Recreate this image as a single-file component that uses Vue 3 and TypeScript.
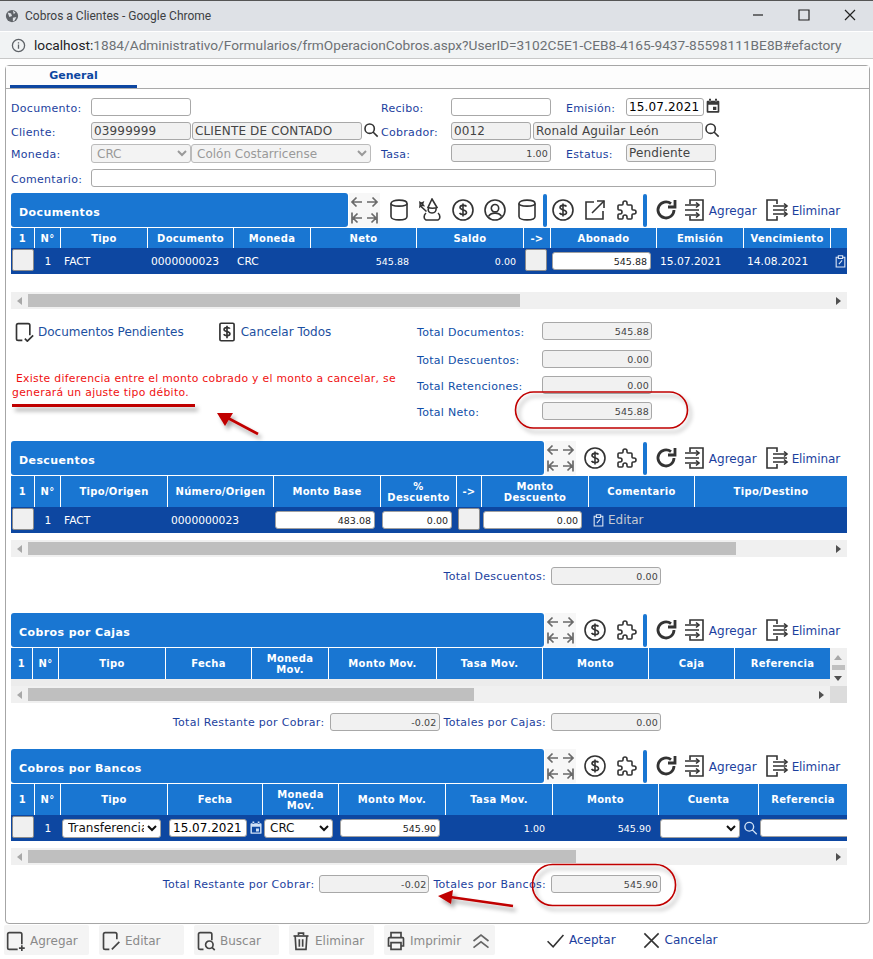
<template>
  <div class="page">
    <header class="titlebar">
      <svg class="globe" viewBox="0 0 16 16"><circle cx="8" cy="8" r="7" fill="#5f6368" /><path d="M3 4l4 1 1 3-3 1zM9 2l3 2-2 2zM9 10l4-1-2 4-2 1z" fill="#dee1e6" /></svg>
      <span class="titlebar-text">Cobros a Clientes - Google Chrome</span>
      <div class="win-controls">
        <svg viewBox="0 0 16 16"><path d="M3 8h10" /></svg>
        <svg viewBox="0 0 16 16"><path d="M3 3h10v10H3z" /></svg>
        <svg viewBox="0 0 16 16"><path d="M3 3l10 10M13 3L3 13" /></svg>
      </div>
    </header>
    <div class="urlbar">
      <svg class="info" viewBox="0 0 16 16"><circle cx="8" cy="8" r="6.5" /><path d="M8 7v4.500M8 4.500v1.300" /></svg>
      <span class="url"><b>localhost:</b>1884/Administrativo/Formularios/frmOperacionCobros.aspx?UserID=3102C5E1-CEB8-4165-9437-85598111BE8B#efactory</span>
    </div>

    <main class="panel">
      <div class="tabs"><div class="tab">General</div></div>

      <form class="form" @submit.prevent>
        <label class="lbl">Documento:</label>
        <input class="fld" />
        <span></span>
        <label class="lbl">Recibo:</label>
        <input class="fld" />
        <span></span>
        <label class="lbl">Emisión:</label>
        <div class="fld-group">
          <input class="fld fld--date" value="15.07.2021" />
          <svg class="ico-sm" viewBox="0 0 24 24"><use href="#cal" /></svg>
        </div>

        <label class="lbl">Cliente:</label>
        <input class="fld fld--ro" value="03999999" readonly />
        <div class="fld-group">
          <input class="fld fld--ro fld--name" value="CLIENTE DE CONTADO" readonly />
          <svg class="ico-sm ico-search" viewBox="0 0 24 24"><path d="M10 3a7 7 0 1 0 0 14a7 7 0 0 0 0-14zM15 15l7 7" /></svg>
        </div>
        <label class="lbl">Cobrador:</label>
        <div class="fld-group fld-group--wide">
          <input class="fld fld--ro fld--code" value="0012" readonly />
          <input class="fld fld--ro fld--name2" value="Ronald Aguilar León" readonly />
          <svg class="ico-sm ico-search" viewBox="0 0 24 24"><path d="M10 3a7 7 0 1 0 0 14a7 7 0 0 0 0-14zM15 15l7 7" /></svg>
        </div>

        <label class="lbl">Moneda:</label>
        <select class="sel" disabled><option>CRC</option></select>
        <div class="fld-group"><select class="sel sel--long" disabled><option>Colón Costarricense</option></select></div>
        <label class="lbl">Tasa:</label>
        <input class="fld fld--ro fld--num" value="1.00" readonly />
        <span></span>
        <label class="lbl">Estatus:</label>
        <input class="fld fld--ro fld--status" value="Pendiente" readonly />

        <label class="lbl">Comentario:</label>
        <input class="fld fld--comment" />
      </form>

      <svg class="defs" width="0" height="0">
        <symbol id="cal" viewBox="0 0 24 24">
          <path d="M4 4h16a1.500 1.500 0 0 1 1.500 1.500v15a1.500 1.500 0 0 1-1.500 1.500H4a1.500 1.500 0 0 1-1.500-1.500v-15A1.500 1.500 0 0 1 4 4zM5 10v9.500h14V10zM6 1h3v4H6zM15 1h3v4h-3zM12 13h5v5h-5z" fill="currentColor" fill-rule="evenodd" stroke="none" />
        </symbol>
      </svg>

      <section v-for="s in sections" :key="s.id" class="section" :class="'section--' + s.id">
        <div class="sec-head">
          <div class="sec-title">{{ s.title }}</div>
          <div class="tools">
            <svg class="arrows" viewBox="0 0 31 34">
              <path d="M13 9H3M7.500 4.500L3 9l4.500 4.500M18 9h10M23.500 4.500L28 9l-4.500 4.500M13 25H4M8.500 20.500L4 25l4.500 4.500M3 19.500v11M18 25h9M22.500 20.500L27 25l-4.500 4.500M28 19.500v11" />
            </svg>
            <template v-for="(t, i) in s.tools" :key="i">
              <span v-if="t === '|'" class="divider"></span>
              <svg v-else class="tool" viewBox="0 0 24 24"><path v-for="d in icons[t]" :key="d" :d="d" /></svg>
            </template>
            <svg class="tool tool--refresh" viewBox="0 0 24 24"><path v-for="d in icons.refresh" :key="d" :d="d" /></svg>
            <svg class="tool tool--add" viewBox="0 0 24 24"><path v-for="d in icons.enter" :key="d" :d="d" /></svg>
            <a class="tool-link">Agregar</a>
            <svg class="tool tool--del" viewBox="0 0 24 24"><path v-for="d in icons.leave" :key="d" :d="d" /></svg>
            <a class="tool-link tool-link--del">Eliminar</a>
          </div>
        </div>

        <div class="table-wrap">
          <div class="table">
            <div class="grid-head" :style="{ gridTemplateColumns: s.columns.map((c) => c.w + 'px').join(' ') }">
              <div v-for="c in s.columns" :key="c.label" class="th">{{ c.label }}</div>
            </div>
            <div v-if="s.cells.length" class="grid-row" :style="{ gridTemplateColumns: s.columns.map((c) => c.w + 'px').join(' ') }">
              <div v-for="(c, i) in s.cells" :key="i" class="td" :class="{ 'td--r': c.k === 'num', 'td--c': c.k === 'n' }">
                <button v-if="c.k === 'check'" class="chk" type="button"></button>
                <template v-else-if="c.k === 'input'">
                  <input class="cell-input" :class="{ 'cell-input--date': c.date }" :value="c.v" :style="{ width: c.w + 'px' }" />
                  <svg v-if="c.date" class="ico-white" viewBox="0 0 24 24"><use href="#cal" /></svg>
                </template>
                <template v-else-if="c.k === 'select'">
                  <select class="cell-select" :style="{ width: c.w + 'px' }"><option>{{ c.v }}</option></select>
                  <svg v-if="c.search" class="ico-white ico-white--search" viewBox="0 0 24 24"><path d="M10 3a7 7 0 1 0 0 14a7 7 0 0 0 0-14zM15 15l7 7" /></svg>
                </template>
                <template v-else-if="c.k === 'edit'">
                  <svg class="ico-clip" viewBox="0 0 24 24"><path v-for="d in icons.clip" :key="d" :d="d" /></svg>
                  <span v-if="c.v" class="edit-text">{{ c.v }}</span>
                </template>
                <span v-else :class="{ 'td-num': c.k === 'num' }">{{ c.v }}</span>
              </div>
            </div>
            <div v-else class="empty-strip"></div>
          </div>
          <div v-if="s.id === 'cajas'" class="vscroll">
            <i class="vs-up"></i><i class="vs-thumb"></i><i class="vs-down"></i>
          </div>
        </div>

        <div class="hscroll">
          <i class="hs-left"></i>
          <div class="hs-track"><div class="hs-thumb" :style="{ width: s.thumb + 'px' }"></div></div>
          <i class="hs-right"></i>
          <div v-if="s.id === 'cajas'" class="hs-corner"></div>
        </div>

        <div v-if="s.id === 'documentos'" class="doc-foot">
          <div class="doc-left">
            <div class="links">
              <a class="link link--first"><svg viewBox="0 0 24 24"><path v-for="d in icons.docCheck" :key="d" :d="d" /></svg>Documentos Pendientes</a>
              <a class="link"><svg viewBox="0 0 24 24"><path v-for="d in icons.docDollar" :key="d" :d="d" /></svg>Cancelar Todos</a>
            </div>
            <p class="warn">Existe diferencia entre el monto cobrado y el monto a cancelar, se generará un ajuste tipo débito.</p>
          </div>
          <div class="doc-totals">
            <template v-for="t in docTotals" :key="t.label">
              <label class="lbl lbl--total">{{ t.label }}</label>
              <input class="fld fld--ro fld--num fld--total" :value="t.v" readonly />
            </template>
          </div>
        </div>
        <div v-else class="sum-row">
          <template v-for="t in s.totals" :key="t.label">
            <label class="lbl lbl--sum">{{ t.label }}</label>
            <input class="fld fld--ro fld--num fld--total" :value="t.v" readonly />
          </template>
        </div>
      </section>
    </main>

    <footer class="actions">
      <button v-for="b in actions" :key="b.label" class="act" type="button">
        <svg viewBox="0 0 24 24"><path v-for="d in icons[b.icon]" :key="d" :d="d" /></svg>{{ b.label }}
      </button>
      <button class="act act--print" type="button">
        <svg viewBox="0 0 24 24"><path v-for="d in icons.print" :key="d" :d="d" /></svg>Imprimir
        <svg class="chev" viewBox="0 0 24 24"><path v-for="d in icons.chev" :key="d" :d="d" /></svg>
      </button>
      <a class="confirm confirm--ok"><svg viewBox="0 0 24 24"><path d="M2 13l7 7L22 5" /></svg>Aceptar</a>
      <a class="confirm"><svg viewBox="0 0 24 24"><path d="M3 3l18 18M21 3L3 21" /></svg>Cancelar</a>
    </footer>

    <!-- hand drawn marks on top of the capture -->
    <svg class="marks" width="873" height="959" viewBox="0 0 873 959">
      <defs>
        <filter id="sh" x="-20%" y="-60%" width="140%" height="240%">
          <feDropShadow dx="3" dy="4" stdDeviation="2" flood-color="#000" flood-opacity="0.35" />
        </filter>
      </defs>
      <g filter="url(#sh)" fill="none" stroke="#c00000">
        <path d="M12 405.500H195" stroke-width="3" />
        <rect x="515.500" y="392" width="172" height="36" rx="18" stroke-width="1.600" />
        <rect x="532.500" y="864.500" width="143" height="41" rx="20" stroke-width="1.600" />
        <path d="M258 434L226 417" stroke-width="2.600" />
        <path d="M217 413L233 413L225 426Z" fill="#c00000" stroke="none" />
        <path d="M513 906L450 897" stroke-width="2.600" />
        <path d="M438 896L453 890L451 904Z" fill="#c00000" stroke="none" />
      </g>
    </svg>
  </div>
</template>

<script setup lang="ts">
interface Column {
  label: string
  w: number
}

interface Cell {
  k: 'check' | 'n' | 'text' | 'num' | 'input' | 'select' | 'edit' | 'blank'
  v?: string
  w?: number
  date?: boolean
  search?: boolean
}

interface Total {
  label: string
  v: string
}

interface Section {
  id: string
  title: string
  tools: string[]
  thumb: number
  columns: Column[]
  cells: Cell[]
  totals: Total[]
}

const icons: Record<string, string[]> = {
  db: ['M4 5.500c0-4.500 16-4.500 16 0v13c0 4.500-16 4.500-16 0z', 'M4 5.500c0 3.500 16 3.500 16 0'],
  wizard: [
    'M13 1l-4 8.500c2 1 7 1 9 0z',
    'M9.500 10c-1 3 .5 5 3.500 5s4.500-2 4-5',
    'M7 15c-2.500 2-2.500 6 0 7h12c2.500-1 2.500-5 0-7',
    'M1.500 8l6 5.500',
    'M1 4.500l1.500.8 1.500-.8-.5 1.600 1 1.400-2-.2-1.500 1.200.2-2z',
  ],
  dollar: [
    'M12 2a10 10 0 1 0 0 20a10 10 0 0 0 0-20z',
    'M15.500 8.500c-1-1.500-6.500-1.800-6.500 1.100 0 3.100 6.500 1.600 6.500 4.800 0 2.800-5.600 2.600-7 .6',
    'M12 5.500v13',
  ],
  user: [
    'M12 2a10 10 0 1 0 0 20a10 10 0 0 0 0-20z',
    'M12 6.500a3.700 3.700 0 1 0 0 7.400a3.700 3.700 0 0 0 0-7.400z',
    'M5.500 18.500c2-4.500 11-4.500 13 0',
  ],
  external: ['M11 4H3v17h17v-8', 'M9 15L21 3', 'M14 3h7v7'],
  puzzle: [
    'M4 7h3a1 1 0 0 0 1-1v-1a2 2 0 0 1 4 0v1a1 1 0 0 0 1 1h3a1 1 0 0 1 1 1v3a1 1 0 0 0 1 1h1a2 2 0 0 1 0 4h-1a1 1 0 0 0-1 1v3a1 1 0 0 1-1 1h-3a1 1 0 0 1-1-1v-1a2 2 0 0 0-4 0v1a1 1 0 0 1-1 1h-3a1 1 0 0 1-1-1v-3a1 1 0 0 1 1-1h1a2 2 0 0 0 0-4h-1a1 1 0 0 1-1-1v-3a1 1 0 0 1 1-1',
  ],
  refresh: ['M20 12a8 8 0 1 1-3-6.300', 'M21 2v7h-7'],
  enter: ['M8 6V2h13v20H8v-4', 'M3 7h14M3 12h14M3 17h14', 'M14 4.500l3 2.500-3 2.500M14 14.500l3 2.500-3 2.500'],
  leave: ['M12 6V2H2v20h10v-4', 'M8 8h14M8 12h14M8 16h14', 'M19 5.500L22 8l-3 2.500M19 13.500l3 2.500-3 2.500'],
  clip: ['M8 4H4v18h16V4h-4', 'M8 1.500h8v5H8z', 'M9 17l6-7'],
  docCheck: ['M10 22H5a2 2 0 0 1-2-2V4a2 2 0 0 1 2-2h12a2 2 0 0 1 2 2v12', 'M13 20l3 3 7-7'],
  docDollar: [
    'M5 1.500h14a1.500 1.500 0 0 1 1.500 1.500v18a1.500 1.500 0 0 1-1.500 1.500H5A1.500 1.500 0 0 1 3.500 21V3A1.500 1.500 0 0 1 5 1.500z',
    'M15.500 8c-1-1.800-7-2-7 1 0 3.200 7 1.800 7 5 0 3-6 2.800-7.500.7',
    'M12 4.500v15',
  ],
  addDoc: ['M14 22H4a2 2 0 0 1-2-2V4a2 2 0 0 1 2-2h13a2 2 0 0 1 2 2v12', 'M19 17v7M15.500 20.500h7'],
  editDoc: ['M10 22H5a2 2 0 0 1-2-2V4a2 2 0 0 1 2-2h12a2 2 0 0 1 2 2v6', 'M13 22l9-9'],
  findDoc: [
    'M9 22H5a2 2 0 0 1-2-2V4a2 2 0 0 1 2-2h12a2 2 0 0 1 2 2v7',
    'M16 12a4.500 4.500 0 1 0 0 9a4.500 4.500 0 0 0 0-9zM19.500 20l3 3',
  ],
  trash: ['M3 6h18', 'M9 5V2.500h6V5', 'M5 6l1 16h12l1-16', 'M10 10v9M14 10v9'],
  print: ['M6 8V2h12v6', 'M6 18H3V9a1 1 0 0 1 1-1h16a1 1 0 0 1 1 1v9h-3', 'M6 14h12v8H6z'],
  chev: ['M3 12l9-7 9 7', 'M3 20l9-7 9 7'],
}

const actions = [
  { label: 'Agregar', icon: 'addDoc' },
  { label: 'Editar', icon: 'editDoc' },
  { label: 'Buscar', icon: 'findDoc' },
  { label: 'Eliminar', icon: 'trash' },
]

const docTotals: Total[] = [
  { label: 'Total Documentos:', v: '545.88' },
  { label: 'Total Descuentos:', v: '0.00' },
  { label: 'Total Retenciones:', v: '0.00' },
  { label: 'Total Neto:', v: '545.88' },
]

const common = ['dollar', 'puzzle', '|']

const sections: Section[] = [
  {
    id: 'documentos',
    title: 'Documentos',
    tools: ['db', 'wizard', 'dollar', 'user', 'db', '|', 'dollar', 'external', 'puzzle', '|'],
    thumb: 492,
    columns: [
      { label: '1', w: 24 },
      { label: 'N°', w: 26 },
      { label: 'Tipo', w: 87 },
      { label: 'Documento', w: 86 },
      { label: 'Moneda', w: 77 },
      { label: 'Neto', w: 106 },
      { label: 'Saldo', w: 107 },
      { label: '->', w: 27 },
      { label: 'Abonado', w: 106 },
      { label: 'Emisión', w: 87 },
      { label: 'Vencimiento', w: 87 },
      { label: '', w: 16 },
    ],
    cells: [
      { k: 'check' },
      { k: 'n', v: '1' },
      { k: 'text', v: 'FACT' },
      { k: 'text', v: '0000000023' },
      { k: 'text', v: 'CRC' },
      { k: 'num', v: '545.88' },
      { k: 'num', v: '0.00' },
      { k: 'check' },
      { k: 'input', v: '545.88', w: 99 },
      { k: 'text', v: '15.07.2021' },
      { k: 'text', v: '14.08.2021' },
      { k: 'edit' },
    ],
    totals: [],
  },
  {
    id: 'descuentos',
    title: 'Descuentos',
    tools: common,
    thumb: 708,
    columns: [
      { label: '1', w: 24 },
      { label: 'N°', w: 26 },
      { label: 'Tipo/Origen', w: 107 },
      { label: 'Número/Origen', w: 106 },
      { label: 'Monto Base', w: 107 },
      { label: '%\nDescuento', w: 76 },
      { label: '->', w: 25 },
      { label: 'Monto\nDescuento', w: 107 },
      { label: 'Comentario', w: 106 },
      { label: 'Tipo/Destino', w: 152 },
    ],
    cells: [
      { k: 'check' },
      { k: 'n', v: '1' },
      { k: 'text', v: 'FACT' },
      { k: 'text', v: '0000000023' },
      { k: 'input', v: '483.08', w: 100 },
      { k: 'input', v: '0.00', w: 70 },
      { k: 'check' },
      { k: 'input', v: '0.00', w: 99 },
      { k: 'edit', v: 'Editar' },
      { k: 'blank' },
    ],
    totals: [{ label: 'Total Descuentos:', v: '0.00' }],
  },
  {
    id: 'cajas',
    title: 'Cobros por Cajas',
    tools: common,
    thumb: 446,
    columns: [
      { label: '1', w: 22 },
      { label: 'N°', w: 26 },
      { label: 'Tipo', w: 107 },
      { label: 'Fecha', w: 86 },
      { label: 'Moneda\nMov.', w: 77 },
      { label: 'Monto Mov.', w: 108 },
      { label: 'Tasa Mov.', w: 106 },
      { label: 'Monto', w: 106 },
      { label: 'Caja', w: 86 },
      { label: 'Referencia', w: 95 },
    ],
    cells: [],
    totals: [
      { label: 'Total Restante por Cobrar:', v: '-0.02' },
      { label: 'Totales por Cajas:', v: '0.00' },
    ],
  },
  {
    id: 'bancos',
    title: 'Cobros por Bancos',
    tools: common,
    thumb: 548,
    columns: [
      { label: '1', w: 24 },
      { label: 'N°', w: 26 },
      { label: 'Tipo', w: 107 },
      { label: 'Fecha', w: 95 },
      { label: 'Moneda\nMov.', w: 76 },
      { label: 'Monto Mov.', w: 107 },
      { label: 'Tasa Mov.', w: 107 },
      { label: 'Monto', w: 106 },
      { label: 'Cuenta', w: 100 },
      { label: 'Referencia', w: 88 },
    ],
    cells: [
      { k: 'check' },
      { k: 'n', v: '1' },
      { k: 'select', v: 'Transferencia', w: 99 },
      { k: 'input', v: '15.07.2021', w: 78, date: true },
      { k: 'select', v: 'CRC', w: 69 },
      { k: 'input', v: '545.90', w: 100 },
      { k: 'num', v: '1.00' },
      { k: 'num', v: '545.90' },
      { k: 'select', v: '', w: 80, search: true },
      { k: 'input', v: '', w: 100 },
    ],
    totals: [
      { label: 'Total Restante por Cobrar:', v: '-0.02' },
      { label: 'Totales por Bancos:', v: '545.90' },
    ],
  },
]
</script>

<style scoped>
.page {
  position: relative;
  width: 873px;
  height: 959px;
  overflow: hidden;
  background: #fff;
  font-family: "DejaVu Sans", Verdana, sans-serif;
  font-size: 11px;
  color: #1c3f9e;
}
.titlebar {
  display: flex;
  align-items: center;
  height: 31px;
  box-sizing: border-box;
  padding-left: 5px;
  background: #dee1e6;
  border-top: 1px solid #555;
}
.globe {
  width: 14px;
  height: 14px;
  margin-right: 6px;
}
.titlebar-text {
  font-family: Roboto, sans-serif;
  font-size: 12px;
  color: #3c4043;
}
.win-controls {
  display: flex;
  gap: 30px;
  margin: 0 0 2px auto;
  padding-right: 15px;
}
.win-controls svg {
  width: 16px;
  height: 16px;
  fill: none;
  stroke: #222;
  stroke-width: 1.2;
}
.urlbar {
  display: flex;
  align-items: center;
  height: 27px;
  margin-top: 1px;
  padding-left: 11px;
  background: #f1f3f4;
  border-bottom: 1px solid #c8c8c8;
  box-sizing: border-box;
}
.info {
  width: 15px;
  height: 15px;
  margin-right: 8px;
  fill: none;
  stroke: #5f6368;
  stroke-width: 1.4;
}
.url {
  font-family: Roboto, sans-serif;
  font-size: 13.700px;
  color: #6d7175;
  white-space: nowrap;
}
.url b {
  font-weight: 400;
  color: #202124;
}
.panel {
  box-sizing: border-box;
  width: 865px;
  height: 859px;
  margin: 6px 0 0 5px;
  padding: 0 5px;
  border: 1px solid #a6a6a6;
  border-radius: 4px;
}
.tabs {
  height: 23px;
  margin: 0 -5px;
  padding-left: 4px;
  background: #fdfdfd;
  border-bottom: 1px solid #aaa;
  box-sizing: border-box;
}
.tab {
  width: 127px;
  height: 22px;
  box-sizing: border-box;
  border-bottom: 3px solid #0d47a1;
  color: #0d47a1;
  font-weight: 700;
  text-align: center;
  line-height: 19px;
}
.form {
  display: grid;
  grid-template-columns: 80px 100px 190px 70px 100px 15px 60px 1fr;
  grid-template-rows: 24px 22px 25px 18px;
  margin-top: 9px;
}
.lbl {
  padding-top: 2px;
  line-height: 18px;
  letter-spacing: 0.3px;
  white-space: nowrap;
}
.fld {
  box-sizing: border-box;
  height: 18px;
  width: 100%;
  margin: 0;
  padding: 0 2px;
  border: 1px solid #a8a8a8;
  border-radius: 3px;
  background: #fff;
  color: #444;
  outline: none;
  letter-spacing: 0.15px;
  font: 12px "DejaVu Sans", Verdana, sans-serif;
}
.fld--ro {
  background: #f1f1f1;
}
.fld--num {
  text-align: right;
  font-size: 9.500px;
}
.fld--name {
  width: 170px;
  margin-left: 1px;
}
.fld--code {
  width: 80px;
  flex: none;
}
.fld--name2 {
  width: 170px;
  margin-left: 2px;
  flex: none;
}
.fld--date {
  width: 78px;
  flex: none;
  color: #000;
}
.fld--status {
  width: 90px;
}
.fld--comment {
  grid-column: 2 / 9;
  width: 625px;
}
.fld-group {
  display: flex;
  align-items: flex-start;
}
.fld-group--wide {
  grid-column: 5 / 9;
}
.ico-sm {
  flex: none;
  width: 16px;
  height: 16px;
  margin-left: 1px;
  color: #3a3a3a;
}
.ico-search {
  fill: none;
  stroke: #333;
  stroke-width: 2.400;
}
.sel {
  box-sizing: border-box;
  height: 19px;
  width: 100px;
  border: 1px solid #bbb;
  border-radius: 3px;
  background: #f3f3f3;
  color: #999;
  opacity: 1;
  padding: 0 0 0 1px;
  font: 12px "DejaVu Sans", Verdana, sans-serif;
}
.sel--long {
  width: 180px;
}
.defs {
  position: absolute;
}

.section {
  width: 836px;
}
.section--documentos {
  margin-top: 6px;
}
.section--cajas {
  margin-top: 28px;
}
.section--bancos {
  margin-top: 18px;
}
.sec-head {
  display: flex;
  height: 34px;
  margin-bottom: 1px;
}
.sec-title {
  flex: 1;
  padding: 13px 0 0 8px;
  background: #1976d2;
  border-radius: 3px;
  color: #fff;
  font-weight: 700;
  letter-spacing: 0.4px;
  line-height: 13px;
}
.tools {
  display: flex;
  align-items: center;
  flex: none;
  padding-right: 7px;
}
.arrows {
  width: 31px;
  height: 34px;
  margin: 0 3px 0 1px;
  background: #f7f7f7;
  fill: none;
  stroke: #6a6a6a;
  stroke-width: 1.700;
}
.tool {
  flex: none;
  width: 32px;
  height: 24px;
  fill: none;
  stroke: #333;
  stroke-width: 1.600;
}
.divider {
  flex: none;
  width: 4px;
  height: 33px;
  background: #1976d2;
  border-radius: 2px;
}
.tool--refresh {
  margin-left: 3px;
  stroke-width: 2.800;
}
.tool--add {
  width: 24px;
  height: 24px;
  margin: 0 3px 0 0;
}
.tool--del {
  width: 24px;
  height: 24px;
  margin: 0 3px 0 8px;
}
.tool-link {
  padding-top: 2px;
  font-size: 12px;
  color: #1c3f9e;
}
.tool-link--del {
  letter-spacing: -0.1px;
}

.table-wrap {
  display: flex;
  overflow: hidden;
}
.table {
  flex: 1;
  min-width: 0;
  overflow: hidden;
}
.grid-head,
.grid-row {
  display: grid;
}
.grid-head {
  height: 20px;
}
.section--descuentos .grid-head,
.section--cajas .grid-head,
.section--bancos .grid-head {
  height: 31px;
}
.th {
  display: flex;
  align-items: center;
  justify-content: center;
  box-sizing: border-box;
  background: #1976d2;
  border-right: 1px solid #fff;
  color: #fff;
  font-size: 10px;
  font-weight: 700;
  letter-spacing: 0.3px;
  line-height: 11px;
  text-align: center;
  white-space: pre-line;
}
.th:last-child {
  border-right: none;
}
.grid-row {
  height: 26px;
  background: #0d47a1;
  color: #fff;
}
.td {
  display: flex;
  align-items: center;
  min-width: 0;
  padding-left: 3px;
  font-size: 10.700px;
  white-space: nowrap;
}
.td:nth-child(n + 1):has(.chk) {
  padding-left: 1px;
  align-items: flex-start;
}
.td--r {
  justify-content: flex-end;
  padding: 0 8px 0 0;
}
.td--c {
  justify-content: center;
  padding: 0;
}
.td:has(.cell-input),
.td:has(.cell-select) {
  padding-left: 1px;
}
.td-num {
  font-size: 9.500px;
}
.chk {
  width: 22px;
  height: 22px;
  margin-top: 1px;
  padding: 0;
  background: #f0f0f0;
  border: 1px solid #8c8c8c;
  border-radius: 2px;
}
.cell-input {
  box-sizing: border-box;
  flex: none;
  height: 18px;
  padding: 0 3px;
  border: 1px solid #a0a0a0;
  border-radius: 3px;
  background: #fff;
  color: #222;
  outline: none;
  font: 9.500px "DejaVu Sans", Verdana, sans-serif;
  text-align: right;
}
.cell-input--date {
  color: #000;
  font-size: 12px;
  text-align: left;
}
.cell-select {
  box-sizing: border-box;
  flex: none;
  height: 19px;
  padding: 0 0 0 1px;
  border: 1px solid #a0a0a0;
  border-radius: 3px;
  background: #fff;
  color: #111;
  font: 12px "DejaVu Sans", Verdana, sans-serif;
}
.ico-white {
  flex: none;
  width: 14px;
  height: 14px;
  margin-left: 2px;
  color: #cfe0f5;
}
.ico-white--search {
  width: 15px;
  height: 16px;
  margin-left: 3px;
  fill: none;
  stroke: #cfe0f5;
  stroke-width: 2.200;
}
.ico-clip {
  flex: none;
  width: 13px;
  height: 15px;
  fill: none;
  stroke: #dfe8f5;
  stroke-width: 2;
}
.edit-text {
  margin-left: 3px;
  color: #c4c9d2;
  font-size: 12px;
}
.empty-strip {
  height: 7px;
  background: #ececec;
}
.vscroll {
  position: relative;
  flex: none;
  width: 17px;
  background: #f0f0f0;
}
.vs-up,
.vs-down,
.vs-thumb {
  position: absolute;
  display: block;
  left: 2px;
}
.vs-up {
  top: 7px;
  left: 4px;
  border: 4px solid transparent;
  border-top: none;
  border-bottom: 5px solid #a8a8a8;
}
.vs-thumb {
  top: 17px;
  width: 13px;
  height: 5px;
  background: #c0c0c0;
}
.vs-down {
  top: 28px;
  left: 4px;
  border: 4px solid transparent;
  border-bottom: none;
  border-top: 5px solid #505050;
}
.hscroll {
  display: flex;
  align-items: center;
  height: 17px;
  background: #f0f0f0;
}
.section--documentos .hscroll {
  margin-top: 18px;
}
.section--descuentos .hscroll,
.section--bancos .hscroll {
  margin-top: 7px;
}
.hs-left {
  flex: none;
  width: 0;
  height: 0;
  margin: 0 6px;
  border: 4px solid transparent;
  border-left: none;
  border-right: 5px solid #a8a8a8;
}
.hs-track {
  flex: 1;
}
.hs-thumb {
  height: 13px;
  background: #bfbfbf;
}
.hs-right {
  flex: none;
  width: 0;
  height: 0;
  margin: 0 6px;
  border: 4px solid transparent;
  border-right: none;
  border-left: 5px solid #505050;
}
.hs-corner {
  flex: none;
  width: 17px;
  height: 17px;
  background: #dcdcdc;
}
.doc-foot {
  display: flex;
  height: 132px;
}
.doc-left {
  flex: none;
  width: 406px;
}
.links {
  display: flex;
  padding-top: 13px;
}
.link {
  display: flex;
  align-items: center;
  font-size: 12px;
  line-height: 20px;
  color: #1c4fa0;
  white-space: nowrap;
}
.link svg {
  flex: none;
  width: 20px;
  height: 20px;
  margin-right: 4px;
  fill: none;
  stroke: #333;
  stroke-width: 2;
}
.link--first {
  margin: 0 33px 0 3px;
}
.warn {
  width: 392px;
  margin: 30px 0 0 1px;
  color: #f01010;
  font-size: 10.800px;
  letter-spacing: 0.3px;
  line-height: 13.500px;
  text-indent: 4px;
}
.doc-totals {
  display: grid;
  grid-template-columns: 125px 110px;
  grid-template-rows: 28px 26px 26px 18px;
  padding-top: 13px;
  align-content: start;
}
.lbl--total {
  color: #0f4ea8;
}
.fld--total {
  width: 110px;
  color: #444;
}
.sum-row {
  display: flex;
  align-items: center;
  justify-content: flex-end;
  height: 18px;
  margin-top: 10px;
  padding-right: 186px;
}
.lbl--sum {
  margin-right: 5px;
  padding-top: 1px;
}
.lbl--sum:nth-child(n + 3) {
  margin-left: 4px;
}
.actions {
  display: flex;
  align-items: center;
  height: 30px;
  margin-top: 1px;
  padding-left: 4px;
}
.act {
  display: flex;
  align-items: center;
  flex: none;
  box-sizing: border-box;
  width: 85px;
  height: 30px;
  margin-right: 10px;
  padding: 1px 0 0 2px;
  border: none;
  border-radius: 2px;
  background: #f4f4f4;
  color: #8a8a8a;
  font: 12px "DejaVu Sans", Verdana, sans-serif;
}
.act svg {
  flex: none;
  width: 20px;
  height: 20px;
  margin-right: 4px;
  fill: none;
  stroke: #444;
  stroke-width: 2;
}
.act--print {
  width: 111px;
  margin-right: 0;
}
.act svg.chev {
  margin: 0 0 0 10px;
  stroke: #666;
}
.confirm {
  display: flex;
  align-items: center;
  margin-left: 26px;
  font-size: 12px;
  color: #1c3f9e;
}
.confirm svg {
  width: 19px;
  height: 19px;
  margin-right: 4px;
  fill: none;
  stroke: #333;
  stroke-width: 2;
}
.confirm--ok {
  margin-left: 51px;
}
.marks {
  position: absolute;
  inset: 0;
  pointer-events: none;
}
</style>

<style>
html,
body {
  margin: 0;
  background: #fff;
}
</style>
